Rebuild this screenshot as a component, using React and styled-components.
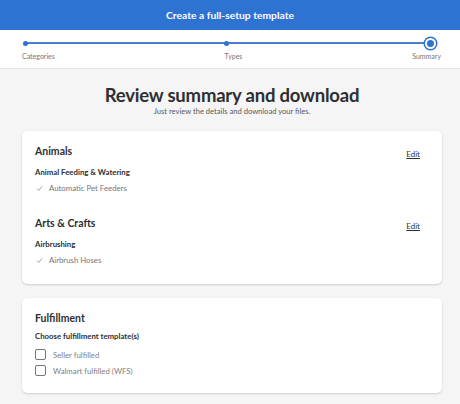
import React from "react";
import styled, { createGlobalStyle } from "styled-components";

const Global = createGlobalStyle`
  html, body { margin: 0; padding: 0; }
  body {
    background: #f5f5f6;
    font-family: Lato, "Open Sans", "Liberation Sans", sans-serif;
    color: #2e2f32;
    width: 460px;
    height: 404px;
    overflow: hidden;
  }
`;

const Page = styled.div`
  display: flex;
  flex-direction: column;
  width: 460px;
  min-height: 404px;
`;

const TopBar = styled.header`
  height: 30px;
  background: #2e72d2;
  color: #fff;
  display: flex;
  align-items: center;
  justify-content: center;
  font-size: 10.3px;
  font-weight: 700;
`;

const StepperWrap = styled.div`
  background: #fff;
  height: 38px;
  border-bottom: 1px solid #e3e4e5;
  padding: 0 23px 0 23px;
  display: flex;
  flex-direction: column;
`;

const Track = styled.div`
  position: relative;
  height: 24px;
  display: flex;
  align-items: center;
  justify-content: space-between;
  padding-top: 1px;
  &::before {
    content: "";
    position: absolute;
    left: 3px;
    right: 5px;
    top: 12px;
    height: 2px;
    background: #4a7fd0;
  }
`;

const Dot = styled.span`
  position: relative;
  z-index: 1;
  box-sizing: border-box;
  width: ${(p) => (p.$current ? "11px" : "5px")};
  height: ${(p) => (p.$current ? "11px" : "5px")};
  border-radius: 50%;
  background: #2e72d2;
  border: ${(p) => (p.$current ? "2px solid #fff" : "none")};
  box-shadow: ${(p) => (p.$current ? "0 0 0 1.5px #2e72d2" : "none")};
  margin-right: ${(p) => (p.$current ? "1px" : "0")};
`;

const Labels = styled.div`
  display: flex;
  justify-content: space-between;
  font-size: 7px;
  color: #74767c;
  margin-top: -3px;
  margin-left: -1px;
  margin-right: -4px;
`;

const Main = styled.main`
  padding: 14px 18px 0 22px;
  display: flex;
  flex-direction: column;
`;

const Title = styled.h1`
  margin: 0;
  text-align: center;
  font-size: 18.5px;
  font-weight: 700;
  color: #2e2f32;
  line-height: 22px;
  letter-spacing: -0.2px;
  padding-top: 1px;
`;

const Subtitle = styled.p`
  margin: 0;
  text-align: center;
  font-size: 7.6px;
  color: #55575c;
  line-height: 11px;
`;

const Card = styled.section`
  background: #fff;
  border-radius: 5px;
  box-shadow: 0 1px 2px rgba(0, 0, 0, 0.15), 0 0 1px rgba(0, 0, 0, 0.08);
  padding: ${(p) => p.$pad || "13px 22px 18px 13px"};
  margin-top: ${(p) => p.$mt || "0"};
  display: flex;
  flex-direction: column;
`;

const Section = styled.div`
  display: flex;
  flex-direction: column;
  margin-top: ${(p) => p.$mt || "0"};
`;

const SectionHead = styled.div`
  display: flex;
  justify-content: space-between;
  align-items: flex-end;
`;

const SectionTitle = styled.h2`
  margin: 0;
  font-size: 10.5px;
  font-weight: 700;
  color: #2e2f32;
  line-height: 14px;
`;

const EditLink = styled.a`
  font-size: 8px;
  color: #2e2f32;
  text-decoration: underline;
  margin-bottom: -1px;
  cursor: pointer;
`;

const SubTitle = styled.h3`
  margin: ${(p) => p.$m || "9px 0 0 0"};
  font-size: 7.8px;
  font-weight: 700;
  color: #2e2f32;
  line-height: 11px;
`;

const Item = styled.div`
  display: flex;
  align-items: center;
  gap: 6px;
  margin-top: 5px;
  font-size: 7.8px;
  color: #74767c;
  line-height: 11px;
  padding-left: 1px;
`;

const Check = styled.svg`
  width: 7px;
  height: 7px;
`;

const OptionRow = styled.label`
  display: flex;
  align-items: center;
  gap: 7px;
  margin-top: ${(p) => p.$mt || "0"};
  font-size: 7.8px;
  color: #7f8085;
`;

const Box = styled.span`
  width: 11px;
  height: 11px;
  box-sizing: border-box;
  border: 1px solid #74767c;
  border-radius: 2px;
  background: #fff;
`;

const CheckMark = () => (
  <Check viewBox="0 0 8 8">
    <path d="M1 4.3 L3 6.3 L7 1.5" fill="none" stroke="#8a8c90" strokeWidth="0.9" />
  </Check>
);

export default function App() {
  return (
    <Page>
      <Global />
      <TopBar>Create a full-setup template</TopBar>
      <StepperWrap>
        <Track>
          <Dot />
          <Dot />
          <Dot $current />
        </Track>
        <Labels>
          <span>Categories</span>
          <span>Types</span>
          <span>Summary</span>
        </Labels>
      </StepperWrap>
      <Main>
        <Title>Review summary and download</Title>
        <Subtitle>Just review the details and download your files.</Subtitle>
        <Card $mt="14px">
          <Section>
            <SectionHead>
              <SectionTitle>Animals</SectionTitle>
              <EditLink>Edit</EditLink>
            </SectionHead>
            <SubTitle>Animal Feeding &amp; Watering</SubTitle>
            <Item>
              <CheckMark />
              Automatic Pet Feeders
            </Item>
          </Section>
          <Section $mt="22px">
            <SectionHead>
              <SectionTitle>Arts &amp; Crafts</SectionTitle>
              <EditLink>Edit</EditLink>
            </SectionHead>
            <SubTitle>Airbrushing</SubTitle>
            <Item>
              <CheckMark />
              Airbrush Hoses
            </Item>
          </Section>
        </Card>
        <Card $mt="14px" $pad="13px 22px 17px 13px">
          <SectionTitle>Fulfillment</SectionTitle>
          <SubTitle $m="6px 0 7px 0">Choose fulfillment template(s)</SubTitle>
          <OptionRow>
            <Box />
            Seller fulfilled
          </OptionRow>
          <OptionRow $mt="5px">
            <Box />
            Walmart fulfilled (WFS)
          </OptionRow>
        </Card>
      </Main>
    </Page>
  );
}
